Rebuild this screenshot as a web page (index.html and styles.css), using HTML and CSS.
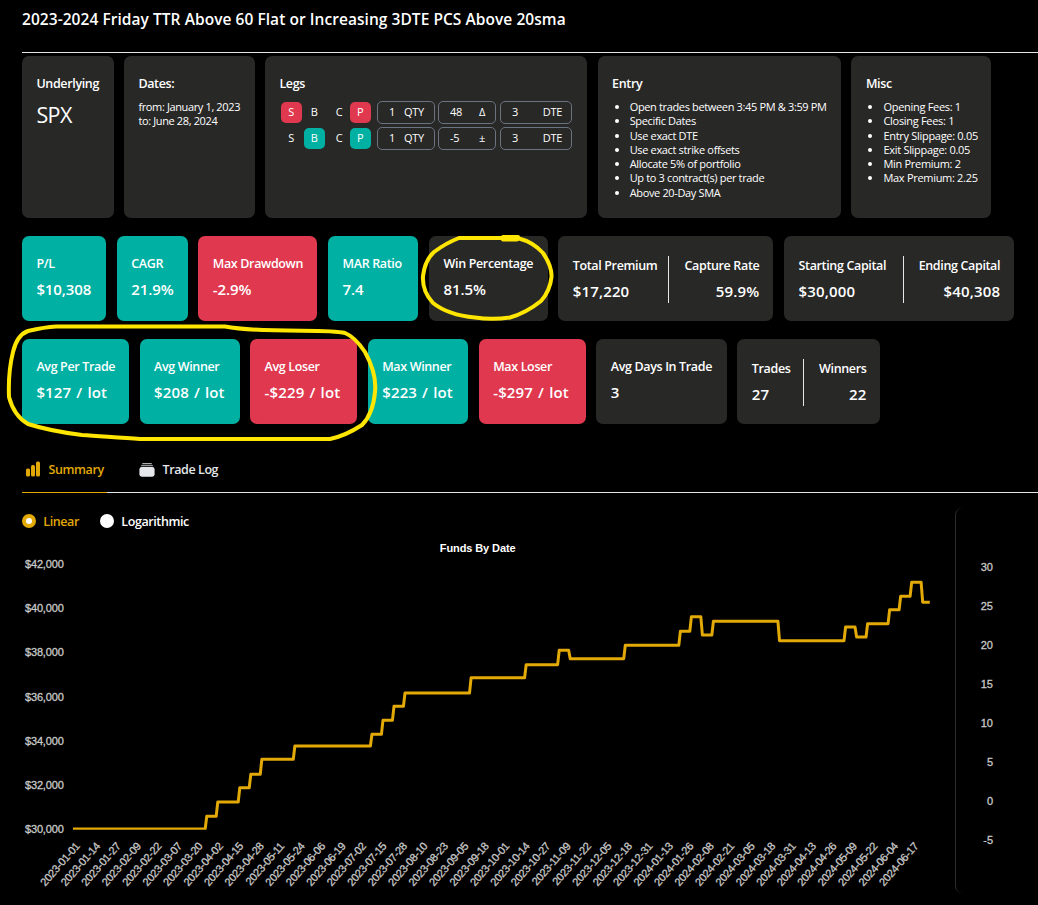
FILE: index.html
```html
<!DOCTYPE html>
<html lang="en">
<head>
    <meta charset="UTF-8">
    <meta name="viewport" content="width=device-width, initial-scale=1.0">
    <title>Backtest Results</title>
    <link rel="stylesheet" href="styles.css">
</head>
<body>
    <div class="page">
        <h1 class="title">2023-2024 Friday TTR Above 60 Flat or Increasing 3DTE PCS Above 20sma</h1>

        <div class="row settings">
            <div class="card underlying">
                <h2>Underlying</h2>
                <p class="symbol">SPX</p>
            </div>
            <div class="card dates">
                <h2>Dates:</h2>
                <p>from: January 1, 2023<br>to: June 28, 2024</p>
            </div>
            <div class="card legs">
                <h2>Legs</h2>
                <div class="leg">
                    <span class="tag red">S</span><span class="tag">B</span><span class="tag">C</span><span class="tag red">P</span>
                    <span class="field qty"><b>1</b><b>QTY</b></span>
                    <span class="field strike"><b>48</b><b>Δ</b></span>
                    <span class="field dte"><b>3</b><b>DTE</b></span>
                </div>
                <div class="leg">
                    <span class="tag">S</span><span class="tag green">B</span><span class="tag">C</span><span class="tag green">P</span>
                    <span class="field qty"><b>1</b><b>QTY</b></span>
                    <span class="field strike"><b>-5</b><b>±</b></span>
                    <span class="field dte"><b>3</b><b>DTE</b></span>
                </div>
            </div>
            <div class="card entry">
                <h2>Entry</h2>
                <ul>
                    <li>Open trades between 3:45 PM &amp; 3:59 PM</li>
                    <li>Specific Dates</li>
                    <li>Use exact DTE</li>
                    <li>Use exact strike offsets</li>
                    <li>Allocate 5% of portfolio</li>
                    <li>Up to 3 contract(s) per trade</li>
                    <li>Above 20-Day SMA</li>
                </ul>
            </div>
            <div class="card misc">
                <h2>Misc</h2>
                <ul>
                    <li>Opening Fees: 1</li>
                    <li>Closing Fees: 1</li>
                    <li>Entry Slippage: 0.05</li>
                    <li>Exit Slippage: 0.05</li>
                    <li>Min Premium: 2</li>
                    <li>Max Premium: 2.25</li>
                </ul>
            </div>
        </div>

        <div class="row stats">
            <div class="card green pl"><h2>P/L</h2><p class="value">$10,308</p></div>
            <div class="card green cagr"><h2>CAGR</h2><p class="value">21.9%</p></div>
            <div class="card red drawdown"><h2>Max Drawdown</h2><p class="value">-2.9%</p></div>
            <div class="card green mar"><h2>MAR Ratio</h2><p class="value">7.4</p></div>
            <div class="card win"><h2>Win Percentage</h2><p class="value">81.5%</p></div>
            <div class="card pair premium">
                <div><h2>Total Premium</h2><p class="value">$17,220</p></div>
                <div><h2>Capture Rate</h2><p class="value">59.9%</p></div>
            </div>
            <div class="card pair capital">
                <div><h2>Starting Capital</h2><p class="value">$30,000</p></div>
                <div><h2>Ending Capital</h2><p class="value">$40,308</p></div>
            </div>
        </div>

        <div class="row stats lots">
            <div class="card green per-trade"><h2>Avg Per Trade</h2><p class="value">$127 / lot</p></div>
            <div class="card green avg-winner"><h2>Avg Winner</h2><p class="value">$208 / lot</p></div>
            <div class="card red avg-loser"><h2>Avg Loser</h2><p class="value">-$229 / lot</p></div>
            <div class="card green max-winner"><h2>Max Winner</h2><p class="value">$223 / lot</p></div>
            <div class="card red max-loser"><h2>Max Loser</h2><p class="value">-$297 / lot</p></div>
            <div class="card days"><h2>Avg Days In Trade</h2><p class="value">3</p></div>
            <div class="card pair trades">
                <div><h2>Trades</h2><p class="value">27</p></div>
                <div><h2>Winners</h2><p class="value">22</p></div>
            </div>
        </div>

        <div class="tabs">
            <div class="tab active">
                <svg width="15" height="16" viewBox="0 0 15 16">
                    <rect x="0" y="7.5" width="4" height="8" rx="1.5"/>
                    <rect x="5" y="4" width="4" height="11.5" rx="1.5"/>
                    <rect x="10" y="0.5" width="4" height="15" rx="1.5"/>
                </svg>
                Summary
            </div>
            <div class="tab log">
                <svg width="16" height="16" viewBox="0 0 16 16">
                    <path d="M4 1h8q1 0 1 1H3q0-1 1-1z" opacity=".75"/>
                    <path d="M3 2.7h10q1 0 1.2 1.6H1.8Q2 2.7 3 2.7z" opacity=".65"/>
                    <rect x="0.4" y="5" width="15.2" height="9.7" rx="2.4"/>
                </svg>
                Trade Log
            </div>
        </div>

        <div class="charts">
            <div class="main-chart">
                <div class="scale">
                    <label class="radio checked"><i></i>Linear</label>
                    <label class="radio"><i></i>Logarithmic</label>
                </div>
                <svg id="funds" width="933" height="370" viewBox="0 535 933 370"></svg>
            </div>
            <div class="side-chart">
                <span>30</span><span>25</span><span>20</span><span>15</span>
                <span>10</span><span>5</span><span>0</span><span>-5</span>
            </div>
        </div>

        <svg class="marker" width="1038" height="905" viewBox="0 0 1038 905">
            <path d="M503 238.5H519Q533 242 543 253Q552 266 551.5 277Q550 291 541 301Q526 313 510 317.5Q492 320 475 317.5Q448 315 433 303Q422 291 423 276Q425 260 434 252Q446 243 459 238H502"/>
            <path d="M503 237H518M503 239.500H517"/>
            <path d="M252 329.500C292 332 330 329 345 333Q355 337 365 352Q377 374 375 392Q373 414 362 425Q345 436 330 439H140C120 438 100 436 82 435Q50 431 28 424Q14 416 9 397Q8 372 13 352Q17 335 28 331Q45 327 56 326.500H225Q238 329 262 330"/>
        </svg>
    </div>

    <script>
        // weeks after 2023-03-27 on which the balance changed
        let funds = [
            [0, 30575], [1, 31223], [3, 31870], [4, 32477], [5, 33157], [8, 33759],
            [15, 34289], [16, 34923], [17, 35557], [18, 36159], [24, 36848], [29, 37441],
            [32, 38093], [33, 37713], [38, 38320], [43, 38954], [44, 39615], [45, 38786],
            [46, 39407], [52, 38528], [58, 39149], [59, 38696], [60, 39298], [62, 39932],
            [63, 40539], [64, 41173], [65, 40270]
        ];
        let left = 51;
        let perDay = 1.5735;
        let svg = document.getElementById("funds");

        function getX(day) {
            return left + day * perDay;
        }
        function getY(amount) {
            return 829 - (amount - 30000) * 0.02208;
        }

        let points = [[getX(0), getY(30000)]];
        let last = 30000;
        funds.forEach(function (item) {
            let day = 85 + item[0] * 7;
            points.push([getX(day - 1), getY(last)]);
            points.push([getX(day), getY(item[1])]);
            last = item[1];
        });
        points.push([getX(544) + 0.8, getY(last)]);

        let html = `<clipPath id="area"><rect x="50.5" y="560" width="857.500" height="269.700"/></clipPath>
            <text class="chart-title" x="455.7" y="552">Funds By Date</text>
            <polyline class="line" clip-path="url(#area)" points="${points.join(" ")}"/>`;

        for (let amount = 30000; amount <= 42000; amount += 2000) {
            html += `<text class="tick" x="41.700" y="${getY(amount) + 4}">$${amount.toLocaleString("en-US")}</text>`;
        }
        for (let day = 0; day <= 533; day += 13) {
            let date = new Date(Date.UTC(2023, 0, 1 + day)).toISOString().slice(0, 10);
            html += `<text class="tick date" transform="translate(${getX(day) + 7.3} 846.5) rotate(-49)">${date}</text>`;
        }
        svg.innerHTML = html;
    </script>
</body>
</html>
```
FILE: styles.css
```css
* {
    box-sizing: border-box;
}
body {
    margin: 0;
    background-color: #000;
    color: #fff;
    font-family: "Open Sans", "Noto Sans", sans-serif;
    font-size: 11px;
}
h1, h2, p, ul {
    margin: 0;
    padding: 0;
}
.page {
    position: relative;
    height: 905px;
    padding-left: 22px;
    overflow: hidden;
}
.title {
    height: 53px;
    padding-top: 8px;
    border-bottom: 1px solid #e5e7eb;
    font-size: 15.5px;
    line-height: 22px;
    font-weight: 600;
    letter-spacing: 0.05px;
}
.row {
    display: flex;
    gap: 10.8px;
    margin-bottom: 18px;
}
.settings {
    gap: 10.5px;
    height: 162px;
    margin-top: 3px;
}
.card {
    flex-shrink: 0;
    padding: 18px 0 0 14.4px;
    border-radius: 7px;
    background-color: #282827;
    white-space: nowrap;
}
.card h2 {
    font-size: 12.5px;
    line-height: 20px;
    font-weight: 600;
    letter-spacing: -0.35px;
}
.green {
    background-color: #00b1a3;
}
.red {
    background-color: #df384f;
}
.underlying { width: 91.5px; }
.dates { width: 130.5px; }
.legs { width: 322.2px; }
.entry { width: 243.3px; }
.misc { width: 140px; }
.pl { width: 84px; }
.cagr { width: 70.8px; }
.drawdown { width: 119px; }
.mar { width: 90.2px; }
.win { width: 118.4px; }
.premium { width: 215px; }
.capital { width: 230px; }
.per-trade { width: 107px; }
.avg-winner { width: 100px; }
.avg-loser { width: 107px; }
.max-winner { width: 100.4px; }
.max-loser { width: 107px; }
.days { width: 130.5px; }
.trades { width: 143px; }

.symbol {
    margin-top: 7px;
    font-size: 21.5px;
    line-height: 28px;
    letter-spacing: -0.6px;
}
.dates p {
    margin-top: 6px;
    line-height: 14.3px;
    letter-spacing: -0.37px;
}
ul {
    margin-top: 6px;
    padding-left: 17.6px;
    line-height: 14.3px;
    letter-spacing: -0.35px;
}
.misc ul {
    letter-spacing: -0.3px;
}
.leg {
    display: flex;
    align-items: center;
    height: 23px;
    margin-bottom: 3px;
    padding-left: 1.4px;
}
.legs h2 {
    margin-bottom: 7px;
}
.tag {
    width: 21px;
    height: 21px;
    margin-right: 2px;
    border-radius: 5px;
    line-height: 20px;
    text-align: center;
}
.tag:nth-child(2) {
    margin-right: 4px;
}
.tag:nth-child(3) {
    margin-right: 0;
}
.field {
    display: flex;
    justify-content: space-between;
    width: 58px;
    height: 23px;
    margin-left: 3px;
    padding: 0 10px 0 11px;
    border: 1px solid #6b7280;
    border-radius: 5px;
    line-height: 20px;
}
.field b {
    font-weight: 400;
    letter-spacing: -0.3px;
}
.leg .qty {
    margin-left: 4.2px;
}
.leg .dte {
    width: 72px;
    margin-left: 4px;
    padding-right: 9px;
}

.stats {
    height: 85px;
}
.lots {
    gap: 10.6px;
}
.value {
    margin-top: 4px;
    font-size: 15px;
    line-height: 22px;
    font-weight: 600;
    letter-spacing: -0.1px;
    word-spacing: 1.5px;
}
.lots .value {
    letter-spacing: 0.15px;
    word-spacing: 1px;
}
.pair {
    display: flex;
    justify-content: space-between;
    padding: 20px 14px 0 14.4px;
}
.pair .value {
    letter-spacing: 0.15px;
}
.pair div + div {
    height: 47px;
    padding-left: 15px;
    border-left: 1px solid #e5e7eb;
    text-align: right;
}

.tabs {
    display: flex;
    height: 51px;
    border-bottom: 1px solid #e5e7eb;
    font-size: 12.5px;
    font-weight: 600;
    letter-spacing: -0.42px;
}
.tab {
    display: flex;
    align-items: center;
    height: 51px;
    padding: 4px 0 0 4px;
    color: #e5e7eb;
}
.tab svg {
    flex-shrink: 0;
    margin-right: 7.6px;
    fill: currentColor;
}
.active {
    width: 85px;
    border-bottom: 1px solid #e2a907;
    color: #e2a907;
}
.log {
    margin-left: 28px;
}

.charts {
    display: flex;
}
.main-chart {
    width: 933px;
    flex-shrink: 0;
}
.scale {
    display: flex;
    gap: 21px;
    height: 42px;
    padding-top: 18px;
}
.radio {
    display: flex;
    align-items: center;
    height: 20px;
    font-size: 12.5px;
    font-weight: 600;
    letter-spacing: -0.4px;
}
.radio i {
    width: 14px;
    height: 14px;
    margin-right: 7.3px;
    border-radius: 50%;
    background-color: #fff;
}
.checked {
    color: #e2a907;
}
.checked i {
    border: 4px solid #e2a907;
}
#funds {
    display: block;
}
.line {
    fill: none;
    stroke: #e2a907;
    stroke-width: 3;
    stroke-linejoin: round;
}
.tick {
    font: 11px "Liberation Sans", Arial, sans-serif;
    letter-spacing: -0.15px;
    fill: #c8c8c8;
    stroke: #c8c8c8;
    stroke-width: 0.3;
    text-anchor: end;
}
.date {
    letter-spacing: -0.3px;
}
.chart-title {
    font: bold 11px "Liberation Sans", Arial, sans-serif;
    letter-spacing: -0.1px;
    fill: #fff;
    text-anchor: middle;
}
.side-chart {
    width: 200px;
    height: 385px;
    margin-top: 15px;
    padding: 40px 162px 0 0;
    flex-shrink: 0;
    border-left: 1px solid #2c2c2c;
    border-radius: 7px;
    font: 11px "Liberation Sans", Arial, sans-serif;
    -webkit-text-stroke: 0.3px #c8c8c8;
    color: #c8c8c8;
    text-align: right;
}
.side-chart span {
    display: block;
    height: 39px;
    line-height: 39px;
}

.marker {
    position: absolute;
    top: 0;
    left: 0;
}
.marker path {
    fill: none;
    stroke: #ffe600;
    stroke-width: 4;
    stroke-linecap: round;
    stroke-linejoin: round;
}
```
